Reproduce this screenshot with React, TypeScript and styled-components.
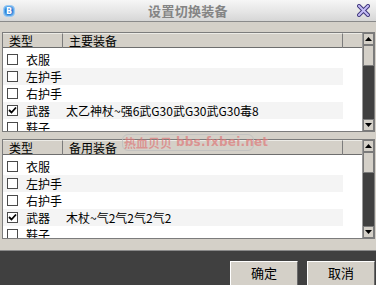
import React from "react";
import styled, { createGlobalStyle } from "styled-components";

const GlobalStyle = createGlobalStyle`
  html, body { margin: 0; padding: 0; background: #404040; }
  body { font-family: "Noto Sans CJK SC", "Noto Sans", sans-serif; }
  * { box-sizing: border-box; }
`;

const Window = styled.div`
  position: relative;
  width: 376px;
  height: 285px;
  display: flex;
  flex-direction: column;
  overflow: hidden;
  font-family: "Noto Sans CJK SC", "Noto Sans", sans-serif;
  font-size: 12px;
  color: #000;
`;

const TitleBar = styled.div`
  height: 22px;
  flex: none;
  display: grid;
  grid-template-columns: 22px 1fr 22px;
  align-items: center;
  background: linear-gradient(#f6f6f6, #e4e4e4 60%, #d6d6d6);
  border-bottom: 1px solid #8a8a8a;
`;

const TitleText = styled.div`
  text-align: center;
  font-size: 13px;
  font-weight: 700;
  color: #848484;
  line-height: 20px;
  letter-spacing: 0.3px;
`;

const IconWrap = styled.div`
  display: flex;
  align-items: center;
  justify-content: center;
  padding-right: 4px;
`;

const Body = styled.div`
  flex: none;
  height: 228px;
  background: #d4d0c8;
  padding: 10px 1px 0 2px;
  display: flex;
  flex-direction: column;
  gap: 7px;
`;

const List = styled.div`
  height: 100px;
  border: 1px solid #7c7c7c;
  background: #fff;
  display: grid;
  grid-template-columns: 1fr 12px;
  overflow: hidden;
`;

const Content = styled.div`
  display: flex;
  flex-direction: column;
  overflow: hidden;
`;

const Header = styled.div`
  flex: none;
  height: 15px;
  display: grid;
  grid-template-columns: 60px 280px 1fr;
  background: #d4d0c8;
  border-bottom: 1px solid #6e6e6e;
`;

const HeadCell = styled.div<{ $last?: boolean }>`
  padding-left: ${(p) => (p.$last ? 0 : 6)}px;
  line-height: 14px;
  font-size: 12px;
  border-right: ${(p) => (p.$last ? "none" : "1px solid #7c7c7c")};
  border-top: 1px solid #ecebe6;
  white-space: nowrap;
`;

const Rows = styled.div`
  padding-top: 3px;
  display: flex;
  flex-direction: column;
`;

const Row = styled.div<{ $alt?: boolean }>`
  flex: none;
  width: 340px;
  height: 17px;
  display: grid;
  grid-template-columns: 60px 1fr;
  align-items: center;
  background: ${(p) => (p.$alt ? "#f4f4f4" : "#fff")};
`;

const TypeCell = styled.div`
  display: flex;
  align-items: center;
  padding-left: 4px;
  gap: 8px;
  line-height: 17px;
  white-space: nowrap;
`;

const Box = styled.span`
  width: 11px;
  height: 11px;
  border: 1px solid #4a4a4a;
  background: #fff;
  display: inline-flex;
  align-items: center;
  justify-content: center;
  flex: none;
`;

const ItemCell = styled.div`
  padding-left: 3px;
  line-height: 17px;
  white-space: nowrap;
`;

const ScrollBar = styled.div`
  display: flex;
  flex-direction: column;
  background: #d4d0c8;
  border-left: 1px solid #9a9a9a;
`;

const ScrollBtn = styled.div`
  flex: none;
  height: 12px;
  background: #d4d0c8;
  border: 1px solid #7a7a7a;
  display: flex;
  align-items: center;
  justify-content: center;
`;

const Thumb = styled.div`
  flex: none;
  height: 21px;
  background: #d4d0c8;
  border: 1px solid #7a7a7a;
`;

const Track = styled.div`
  flex: 1;
  background: #404040;
`;

const Footer = styled.div`
  flex: 1;
  background: #404040;
  border-top: 1px solid #8a8a8a;
  display: flex;
  justify-content: flex-end;
  align-items: flex-start;
  padding: 10px 1px 0 0;
  gap: 9px;
`;

const Button = styled.button`
  width: 68px;
  height: 26px;
  background: #d4d0c8;
  border: 1px solid;
  border-color: #ffffff #6a6a6a #6a6a6a #ffffff;
  font-family: "Noto Sans CJK SC", "Noto Sans", sans-serif;
  font-size: 13px;
  line-height: 20px;
  padding: 0 0 2px;
  color: #000;
`;

const Watermark = styled.div`
  position: absolute;
  left: 122px;
  top: 134px;
  width: 132px;
  height: 17px;
  border: 1px solid rgba(190, 190, 190, 0.8);
  border-radius: 6px;
  display: flex;
  align-items: center;
  gap: 4px;
  padding-left: 1px;
  font-family: "Noto Sans CJK SC", "Noto Sans", sans-serif;
  font-weight: 700;
  font-size: 12px;
  line-height: 15px;
  color: rgba(222, 120, 120, 0.7);
  white-space: nowrap;
  pointer-events: none;
`;

const WmLatin = styled.span`
  font-family: "DejaVu Sans", sans-serif;
  font-size: 12px;
  letter-spacing: 0.2px;
`;

const AppIcon = () => (
  <svg width="12" height="12" viewBox="0 0 12 12">
    <rect x="0.5" y="0.5" width="11" height="11" rx="4" fill="#5aa6ea" stroke="#9ccaf2" />
    <circle cx="6" cy="6" r="4" fill="#2f7fd6" />
    <text x="6" y="9" textAnchor="middle" fontSize="8" fontWeight="700" fill="#fff" fontFamily="DejaVu Sans, sans-serif">B</text>
  </svg>
);

const CloseIcon = () => (
  <svg width="13" height="13" viewBox="0 0 13 13">
    <path d="M2 2 L11 11 M11 2 L2 11" stroke="#3d3478" strokeWidth="4" strokeLinecap="square" />
    <path d="M2 2 L11 11 M11 2 L2 11" stroke="#c4bcf6" strokeWidth="2" strokeLinecap="square" />
  </svg>
);

const Check = () => (
  <svg width="9" height="9" viewBox="0 0 9 9">
    <path d="M1 4 L3.5 6.5 L8 1.5" stroke="#000" strokeWidth="1.8" fill="none" />
  </svg>
);

const Arrow = ({ up }: { up?: boolean }) => (
  <svg width="7" height="4" viewBox="0 0 7 4">
    <path d={up ? "M0 4 L3.5 0 L7 4 Z" : "M0 0 L7 0 L3.5 4 Z"} fill="#000" />
  </svg>
);

type Item = { type: string; checked?: boolean; value?: string };

const listA: Item[] = [
  { type: "衣服" },
  { type: "左护手" },
  { type: "右护手" },
  { type: "武器", checked: true, value: "太乙神杖~强6武G30武G30武G30毒8" },
  { type: "鞋子" },
];

const listB: Item[] = [
  { type: "衣服" },
  { type: "左护手" },
  { type: "右护手" },
  { type: "武器", checked: true, value: "木杖~气2气2气2气2" },
  { type: "鞋子" },
];

const EquipList = ({ title, items }: { title: string; items: Item[] }) => (
  <List>
    <Content>
      <Header>
        <HeadCell>类型</HeadCell>
        <HeadCell>{title}</HeadCell>
        <HeadCell $last />
      </Header>
      <Rows>
        {items.map((it, i) => (
          <Row key={i} $alt={i % 2 === 1}>
            <TypeCell>
              <Box>{it.checked && <Check />}</Box>
              {it.type}
            </TypeCell>
            <ItemCell>{it.value}</ItemCell>
          </Row>
        ))}
      </Rows>
    </Content>
    <ScrollBar>
      <ScrollBtn><Arrow up /></ScrollBtn>
      <Thumb />
      <Track />
      <ScrollBtn><Arrow /></ScrollBtn>
    </ScrollBar>
  </List>
);

export default function App() {
  return (
    <>
      <GlobalStyle />
      <Window>
        <TitleBar>
          <IconWrap><AppIcon /></IconWrap>
          <TitleText>设置切换装备</TitleText>
          <IconWrap><CloseIcon /></IconWrap>
        </TitleBar>
        <Body>
          <EquipList title="主要装备" items={listA} />
          <EquipList title="备用装备" items={listB} />
        </Body>
        <Footer>
          <Button>确定</Button>
          <Button>取消</Button>
        </Footer>
        <Watermark>
          <span>热血贝贝</span>
          <WmLatin>bbs.fxbei.net</WmLatin>
        </Watermark>
      </Window>
    </>
  );
}
